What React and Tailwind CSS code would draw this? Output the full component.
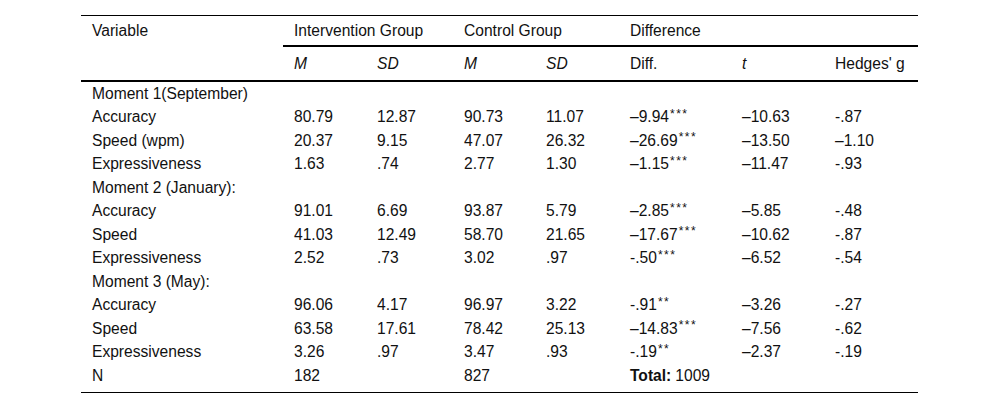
import React from "react";

const cols = "grid grid-cols-[202px_83px_87px_82px_84px_112px_93px_94px]";

const rows = [
  { label: "Moment 1(September)", head: true },
  { label: "Accuracy", v: ["80.79", "12.87", "90.73", "11.07", "–9.94", "***", "–10.63", "-.87"] },
  { label: "Speed (wpm)", v: ["20.37", "9.15", "47.07", "26.32", "–26.69", "***", "–13.50", "–1.10"] },
  { label: "Expressiveness", v: ["1.63", ".74", "2.77", "1.30", "–1.15", "***", "–11.47", "-.93"] },
  { label: "Moment 2 (January):", head: true },
  { label: "Accuracy", v: ["91.01", "6.69", "93.87", "5.79", "–2.85", "***", "–5.85", "-.48"] },
  { label: "Speed", v: ["41.03", "12.49", "58.70", "21.65", "–17.67", "***", "–10.62", "-.87"] },
  { label: "Expressiveness", v: ["2.52", ".73", "3.02", ".97", "-.50", "***", "–6.52", "-.54"] },
  { label: "Moment 3 (May):", head: true },
  { label: "Accuracy", v: ["96.06", "4.17", "96.97", "3.22", "-.91", "**", "–3.26", "-.27"] },
  { label: "Speed", v: ["63.58", "17.61", "78.42", "25.13", "–14.83", "***", "–7.56", "-.62"] },
  { label: "Expressiveness", v: ["3.26", ".97", "3.47", ".93", "-.19", "**", "–2.37", "-.19"] },
];

const Cell = ({ children, className = "" }) => (
  <div className={`pl-[11px] flex items-center whitespace-nowrap ${className}`}>{children}</div>
);

export default function App() {
  return (
    <div
      className="w-[1000px] h-[408px] bg-white text-[#111] text-[15.6px] leading-none pt-[15px]"
      style={{ fontFamily: '"Liberation Sans", Arial, sans-serif' }}
    >
      <div className="ml-[81px] w-[837px] border-t border-black border-b-[1.5px] pb-[4px]">
        {/* header row 1 */}
        <div className={`${cols} h-[31px]`}>
          <Cell className="pt-[1px] pb-[2px]">Variable</Cell>
          <div className="col-span-7 border-b-2 border-black grid grid-cols-[170px_166px_299px]">
            <Cell className="pt-[1px]">Intervention Group</Cell>
            <Cell className="pt-[1px]">Control Group</Cell>
            <Cell className="pt-[1px]">Difference</Cell>
          </div>
        </div>
        {/* header row 2 */}
        <div className={`${cols} h-[35px] border-b-2 border-black pt-[1px]`}>
          <Cell></Cell>
          <Cell className="italic">M</Cell>
          <Cell className="italic">SD</Cell>
          <Cell className="italic">M</Cell>
          <Cell className="italic">SD</Cell>
          <Cell>Diff.</Cell>
          <Cell className="italic">t</Cell>
          <Cell>Hedges' g</Cell>
        </div>
        {rows.map((r, i) =>
          r.head ? (
            <div key={i} className={`${cols} h-[23.5px]`}>
              <Cell className="col-span-8">{r.label}</Cell>
            </div>
          ) : (
            <div key={i} className={`${cols} h-[23.5px]`}>
              <Cell>{r.label}</Cell>
              <Cell>{r.v[0]}</Cell>
              <Cell>{r.v[1]}</Cell>
              <Cell>{r.v[2]}</Cell>
              <Cell>{r.v[3]}</Cell>
              <Cell>
                {r.v[4]}
                <span className="text-[12px] tracking-[1.5px] self-start mt-[2px] ml-[1px]">{r.v[5]}</span>
              </Cell>
              <Cell>{r.v[6]}</Cell>
              <Cell>{r.v[7]}</Cell>
            </div>
          )
        )}
        <div className={`${cols} h-[23.5px]`}>
          <Cell>N</Cell>
          <Cell>182</Cell>
          <Cell></Cell>
          <Cell>827</Cell>
          <Cell></Cell>
          <Cell className="col-span-3">
            <b className="font-bold mr-[4px]">Total:</b>1009
          </Cell>
        </div>
      </div>
    </div>
  );
}
